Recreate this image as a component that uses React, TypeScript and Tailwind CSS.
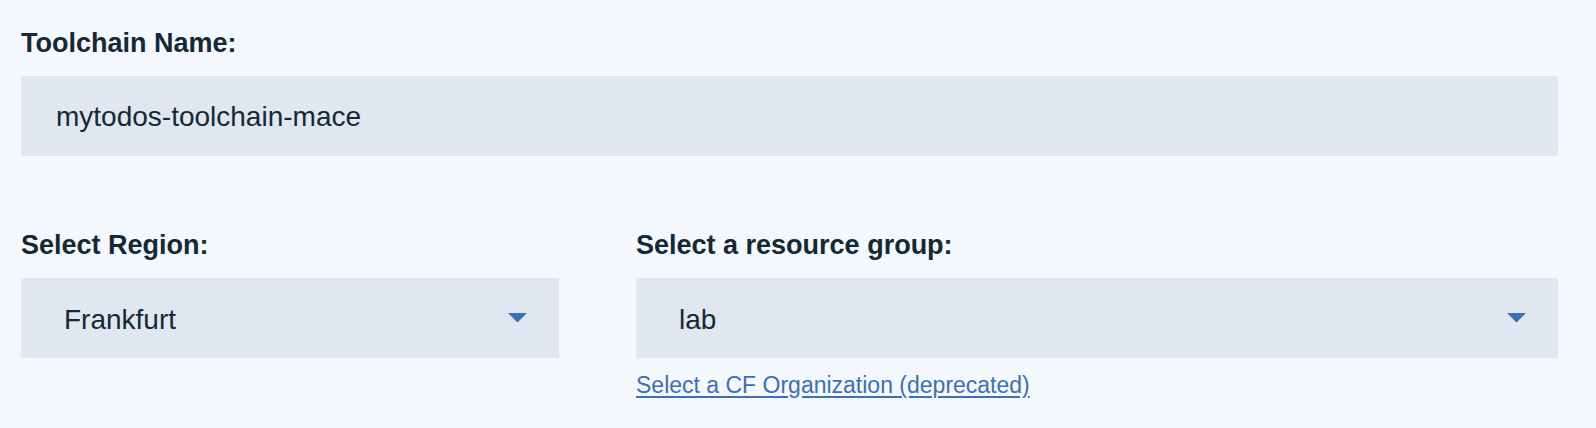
import React from "react";

function Caret() {
  return (
    <svg width="19" height="10" viewBox="0 0 19 10" className="shrink-0">
      <polygon points="0,0 19,0 9.5,9.5" fill="#3d70b2" />
    </svg>
  );
}

export default function App() {
  const font = { fontFamily: '"Liberation Sans", Arial, Helvetica, sans-serif' };
  return (
    <div
      className="w-[1596px] h-[428px] bg-[#f4f7fb] text-[#152935] pl-[21px] pr-[38px] pt-[30px]"
      style={font}
    >
      <label className="block text-[27px] leading-[27px] font-bold">Toolchain Name:</label>
      <div className="mt-[19px] h-[80px] bg-[#e0e7f1] pl-[35px] pt-[2px] text-[28px] leading-[78px]">
        mytodos-toolchain-mace
      </div>
      <div className="mt-[76px] flex gap-[77px]">
        <div className="w-[538px] shrink-0">
          <label className="block text-[27px] leading-[27px] font-bold">Select Region:</label>
          <div className="mt-[19px] h-[80px] bg-[#e0e7f1] pl-[43px] pr-[32px] flex items-center justify-between">
            <span className="text-[28px] leading-[28px] pt-[3px]">Frankfurt</span>
            <Caret />
          </div>
        </div>
        <div className="flex-1">
          <label className="block text-[27px] leading-[27px] font-bold">Select a resource group:</label>
          <div className="mt-[19px] h-[80px] bg-[#e0e7f1] pl-[43px] pr-[32px] flex items-center justify-between">
            <span className="text-[28px] leading-[28px] pt-[3px]">lab</span>
            <Caret />
          </div>
          <a
            href="#"
            className="mt-[16px] inline-block text-[23px] leading-[23px] text-[#3d70b2] underline underline-offset-[3px]"
          >
            Select a CF Organization (deprecated)
          </a>
        </div>
      </div>
    </div>
  );
}
